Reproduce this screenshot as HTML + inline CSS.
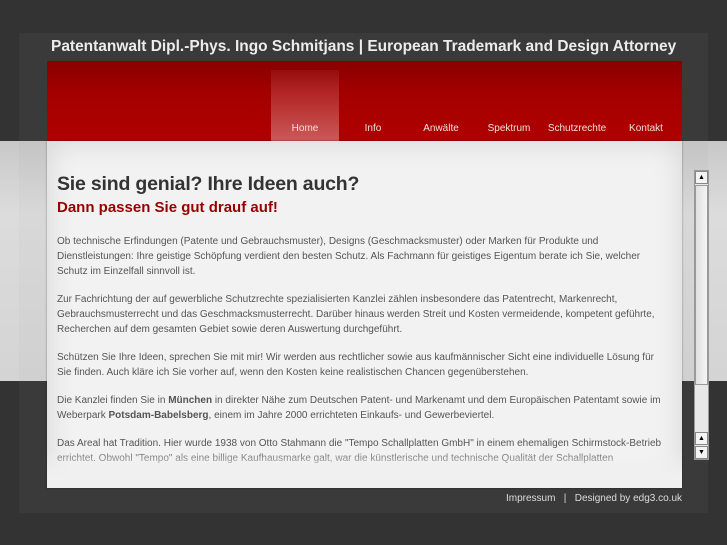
<!DOCTYPE html>
<html><head><meta charset="utf-8"><style>
*{margin:0;padding:0;box-sizing:border-box}
body{width:727px;height:545px;overflow:hidden;background:#333;position:relative;font-family:"Liberation Sans",sans-serif}
.band{position:absolute;left:0;top:141px;width:727px;height:240px;background:linear-gradient(#c8c8c8,#dcdcdc 30%,#d4d4d4)}
.outer{position:absolute;left:19px;top:33px;width:689px;height:480px;background:#3a3a3a}
.outer .bandin{position:absolute;left:0;top:108px;width:689px;height:240px;background:linear-gradient(#c4c4c4,#d8d8d8 30%,#d0d0d0)}
.title{position:absolute;left:51px;top:38px;font-size:15.5px;font-weight:bold;color:#ececec;white-space:nowrap;transform:scaleX(0.998);transform-origin:left}
.hdr{position:absolute;left:47px;top:61px;width:635px;height:80px;background:linear-gradient(#880000,#a40000 40%,#b00000)}
.home{position:absolute;left:224px;top:9px;width:68px;height:71px;background:linear-gradient(rgba(255,255,255,0.05),rgba(255,255,255,0.35))}
.nav{position:absolute;top:62px;font-size:10px;color:#f2dede;width:68px;text-align:center}
.content{position:absolute;left:47px;top:141px;width:635px;height:347px;background:#f2f2f2;box-shadow:inset 0 0 30px rgba(0,0,0,0.12),0 0 2px rgba(0,0,0,.4);overflow:hidden}
h1{position:absolute;left:10px;top:32px;font-size:19.5px;color:#333;font-weight:bold;letter-spacing:-0.2px}
h2{position:absolute;left:10px;top:58px;font-size:15px;color:#990000;font-weight:bold}
.txt{position:absolute;left:10px;top:93px;width:620px;font-size:10px;line-height:15px;color:#555;white-space:nowrap}
.txt p{margin-bottom:13px}
.fade{position:absolute;left:0;bottom:0;width:635px;height:40px;background:linear-gradient(rgba(242,242,242,0),#f0f0f0 70%)}
.sb{position:absolute;left:694px;top:170px;width:15px;height:290px;background:#e8e8e8;border:1px solid #999}
.btn{position:absolute;left:0;width:13px;height:13px;background:#f4f4f4;border:1px solid #888;font-size:7px;text-align:center;line-height:12px;color:#000}
.thumb{position:absolute;left:0;top:14px;width:13px;height:200px;background:linear-gradient(90deg,#e0e0e0,#f4f4f4);border:1px solid #999}
.foot{position:absolute;left:506px;top:493px;font-size:10px;color:#ddd;white-space:nowrap}
</style></head><body>
<div class="band"></div>
<div class="outer"><div class="bandin"></div></div>
<div class="title">Patentanwalt Dipl.-Phys. Ingo Schmitjans | European Trademark and Design Attorney</div>
<div class="hdr"><div class="home"></div>
<div class="nav" style="left:224px">Home</div>
<div class="nav" style="left:292px">Info</div>
<div class="nav" style="left:360px">Anwälte</div>
<div class="nav" style="left:428px">Spektrum</div>
<div class="nav" style="left:496px">Schutzrechte</div>
<div class="nav" style="left:565px">Kontakt</div>
</div>
<div class="content">
<h1>Sie sind genial? Ihre Ideen auch?</h1>
<h2>Dann passen Sie gut drauf auf!</h2>
<div class="txt">
<p>Ob technische Erfindungen (Patente und Gebrauchsmuster), Designs (Geschmacksmuster) oder Marken für Produkte und<br>Dienstleistungen: Ihre geistige Schöpfung verdient den besten Schutz. Als Fachmann für geistiges Eigentum berate ich Sie, welcher<br>Schutz im Einzelfall sinnvoll ist.</p>
<p>Zur Fachrichtung der auf gewerbliche Schutzrechte spezialisierten Kanzlei zählen insbesondere das Patentrecht, Markenrecht,<br>Gebrauchsmusterrecht und das Geschmacksmusterrecht. Darüber hinaus werden Streit und Kosten vermeidende, kompetent geführte,<br>Recherchen auf dem gesamten Gebiet sowie deren Auswertung durchgeführt.</p>
<p>Schützen Sie Ihre Ideen, sprechen Sie mit mir! Wir werden aus rechtlicher sowie aus kaufmännischer Sicht eine individuelle Lösung für<br>Sie finden. Auch kläre ich Sie vorher auf, wenn den Kosten keine realistischen Chancen gegenüberstehen.</p>
<p>Die Kanzlei finden Sie in <b>München</b> in direkter Nähe zum Deutschen Patent- und Markenamt und dem Europäischen Patentamt sowie im<br>Weberpark <b>Potsdam-Babelsberg</b>, einem im Jahre 2000 errichteten Einkaufs- und Gewerbeviertel.</p>
<p>Das Areal hat Tradition. Hier wurde 1938 von Otto Stahmann die "Tempo Schallplatten GmbH" in einem ehemaligen Schirmstock-Betrieb<br>errichtet. Obwohl "Tempo" als eine billige Kaufhausmarke galt, war die künstlerische und technische Qualität der Schallplatten</p>
</div>
<div class="fade"></div>
</div>
<div class="sb">
<div class="btn" style="top:0">▲</div>
<div class="thumb"></div>
<div class="btn" style="top:261px">▲</div>
<div class="btn" style="top:275px">▼</div>
</div>
<div class="foot">Impressum &nbsp;&nbsp;| &nbsp;&nbsp;Designed by edg3.co.uk</div>
</body></html>
